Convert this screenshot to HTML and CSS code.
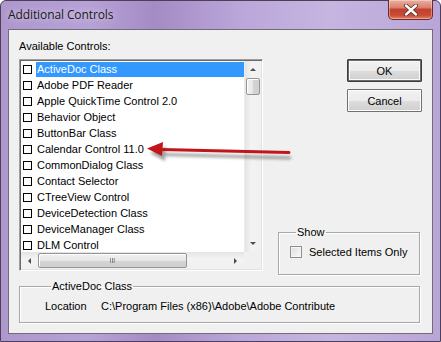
FILE: index.html
```html
<!DOCTYPE html>
<html>
<head>
<meta charset="utf-8">
<link rel="stylesheet" href="styles.css">
</head>
<body>
<div class="window">
  <div class="titlebar">
    <span class="title">Additional Controls</span>
    <div class="close">
      <svg width="18" height="12" viewBox="0 0 18 12">
        <path d="M4 1.5 L14 10.5 M14 1.5 L4 10.5" stroke="#5a2a22" stroke-width="4" stroke-linecap="round"/>
        <path d="M4 1.5 L14 10.5 M14 1.5 L4 10.5" stroke="#ffffff" stroke-width="2.4" stroke-linecap="round"/>
      </svg>
    </div>
  </div>
  <div class="client">
    <div class="lbl">Available Controls:</div>
    <div class="main">
      <div class="listbox">
        <div class="listarea">
          <div class="items">
            <div class="item"><span class="cb"></span><span class="txt sel">ActiveDoc Class</span></div>
            <div class="item"><span class="cb"></span><span class="txt">Adobe PDF Reader</span></div>
            <div class="item"><span class="cb"></span><span class="txt">Apple QuickTime Control 2.0</span></div>
            <div class="item"><span class="cb"></span><span class="txt">Behavior Object</span></div>
            <div class="item"><span class="cb"></span><span class="txt">ButtonBar Class</span></div>
            <div class="item"><span class="cb"></span><span class="txt">Calendar Control 11.0</span></div>
            <div class="item"><span class="cb"></span><span class="txt">CommonDialog Class</span></div>
            <div class="item"><span class="cb"></span><span class="txt">Contact Selector</span></div>
            <div class="item"><span class="cb"></span><span class="txt">CTreeView Control</span></div>
            <div class="item"><span class="cb"></span><span class="txt">DeviceDetection Class</span></div>
            <div class="item"><span class="cb"></span><span class="txt">DeviceManager Class</span></div>
            <div class="item"><span class="cb"></span><span class="txt">DLM Control</span></div>
          </div>
          <div class="vscroll">
            <div class="arrow"><span class="tri up"></span></div>
            <div class="vthumb"></div>
            <div class="vtrack"></div>
            <div class="arrow"><span class="tri down"></span></div>
          </div>
        </div>
        <div class="hrow">
          <div class="hscroll">
            <div class="arrow"><span class="tri left"></span></div>
            <div class="hthumb"><span class="grip">III</span></div>
            <div class="htrack"></div>
            <div class="arrow"><span class="tri right"></span></div>
          </div>
          <div class="corner"></div>
        </div>
      </div>
      <div class="side">
        <div class="btn default">OK</div>
        <div class="btn">Cancel</div>
        <div class="spacer"></div>
        <fieldset class="group show">
          <legend>Show</legend>
          <div class="chkrow"><span class="bigcb"></span><span>Selected Items Only</span></div>
        </fieldset>
      </div>
    </div>
    <fieldset class="group info">
      <legend>ActiveDoc Class</legend>
      <div class="locrow"><span class="loclbl">Location</span><span>C:\Program Files (x86)\Adobe\Adobe Contribute</span></div>
    </fieldset>
  </div>
  <svg class="redarrow" width="160" height="30" viewBox="0 0 160 30">
    <defs>
      <filter id="sh" x="-10%" y="-50%" width="120%" height="200%">
        <feGaussianBlur stdDeviation="1.6"/>
      </filter>
    </defs>
    <g filter="url(#sh)" opacity="0.55" transform="translate(2,4)">
      <path d="M17 9.5 L143 13" stroke="#555" stroke-width="3.2" fill="none"/>
      <path d="M2 8 L18 1.5 L17 16 Z" fill="#555"/>
    </g>
    <path d="M16 8.5 L143 11.5" stroke="#c4141b" stroke-width="3" fill="none" stroke-linecap="round"/>
    <path d="M1 7.5 L17 1 L16 15 Z" fill="#c4141b"/>
  </svg>
</div>
</body>
</html>
```

FILE: styles.css
```css
* { box-sizing: border-box; }
html, body { margin: 0; padding: 0; }
body { width: 441px; height: 342px; overflow: hidden; background: #fff; }

.window {
  position: relative;
  width: 441px;
  height: 342px;
  border: 1px solid #4a4058;
  border-radius: 6px 6px 0 0;
  background: linear-gradient(to right, #ad97cd 0%, #b7a2d7 20%, #a48bc4 35%, #bba7da 55%, #c5b5e0 75%, #b9a5d8 100%);
  display: flex;
  flex-direction: column;
  font-family: "Liberation Sans", Arial, sans-serif;
  font-size: 11px;
  color: #000;
}

.titlebar {
  height: 28px;
  display: flex;
  align-items: flex-start;
  padding-left: 7px;
  position: relative;
}
.title {
  font-family: "Open Sans", "Noto Sans", sans-serif;
  font-size: 12px;
  line-height: 16px;
  margin-top: 6px;
  color: #1a1a1a;
  text-shadow: 0 0 6px rgba(255,255,255,0.7);
  letter-spacing: -0.1px;
}
.close {
  position: absolute;
  right: 7px;
  top: -1px;
  width: 45px;
  height: 20px;
  border: 1px solid #6e2a22;
  border-top: none;
  border-radius: 0 0 5px 5px;
  background: linear-gradient(to bottom, #eab1a2 0%, #d9806c 40%, #c2402d 50%, #c94a34 80%, #e0836b 100%);
  box-shadow: inset 0 0 0 1px rgba(255,255,255,0.35);
  display: flex;
  align-items: center;
  justify-content: center;
}

.client {
  margin: 0 7px 0 7px;
  height: 305px;
  background: #f0f0f0;
  border: 1px solid #6f6f6f;
  padding: 10px 10px 0 10px;
  display: flex;
  flex-direction: column;
}

.lbl { line-height: 13px; height: 13px; margin-bottom: 6px; }

.main { display: flex; }

.listbox {
  width: 245px;
  height: 212px;
  border: 1px solid #a0a0a0;
  border-right-color: #fff;
  border-bottom-color: #fff;
  box-shadow: inset 1px 1px 0 #696969, inset -1px -1px 0 #e3e3e3;
  padding: 1px;
  background: #fff;
  display: flex;
  flex-direction: column;
}
.listarea { flex: 1; display: flex; overflow: hidden; }
.items { flex: 1; padding-top: 0; overflow: hidden; }
.item { height: 16px; display: flex; align-items: center; padding-left: 2px; white-space: nowrap; }
.cb {
  width: 9px; height: 9px;
  border: 1px solid #000;
  background: #fff;
  margin-right: 4px;
  flex: none;
}
.txt { line-height: 15px; padding: 0 1px; }
.txt.sel { background: #3399ff; color: #fff; flex: 1; }

.vscroll {
  width: 17px;
  display: flex;
  flex-direction: column;
  background: linear-gradient(to right, #e4e4e4, #f3f3f3 40%, #f0f0f0);
  border-left: 1px solid #ececec;
}
.arrow { height: 17px; flex: none; display: flex; align-items: center; justify-content: center; }
.vthumb {
  height: 17px; margin: 0 1px;
  border: 1px solid #959595;
  border-radius: 2px;
  background: linear-gradient(to right, #f2f2f2, #e6e6e6 50%, #d5d5d5 51%, #cfcfcf);
  box-shadow: inset 1px 1px 0 #fff;
}
.vtrack { flex: 1; }
.tri { width: 0; height: 0; display: block; }
.tri.up { border-left: 3px solid transparent; border-right: 3px solid transparent; border-bottom: 3px solid #4d4d4d; }
.tri.down { border-left: 3px solid transparent; border-right: 3px solid transparent; border-top: 3px solid #4d4d4d; }
.tri.left { border-top: 3px solid transparent; border-bottom: 3px solid transparent; border-right: 3px solid #4d4d4d; }
.tri.right { border-top: 3px solid transparent; border-bottom: 3px solid transparent; border-left: 3px solid #4d4d4d; }

.hrow { height: 17px; display: flex; flex: none; }
.hscroll {
  flex: 1;
  display: flex;
  background: linear-gradient(to bottom, #e4e4e4, #f3f3f3 40%, #f0f0f0);
}
.hscroll .arrow { width: 17px; height: 17px; }
.hthumb {
  width: 149px; margin: 1px 0;
  border: 1px solid #959595;
  border-radius: 2px;
  background: linear-gradient(to bottom, #f2f2f2, #e6e6e6 50%, #d5d5d5 51%, #cfcfcf);
  box-shadow: inset 1px 1px 0 #fff;
  display: flex; align-items: center; justify-content: center;
}
.grip { font-size: 8px; letter-spacing: 0; color: #555; transform: scaleX(0.8); line-height: 8px; font-family: "Liberation Sans", sans-serif; }
.htrack { flex: 1; }
.corner { width: 17px; background: #f0f0f0; }

.side {
  flex: 1;
  display: flex;
  flex-direction: column;
  align-items: flex-end;
  padding-left: 15px;
}
.btn {
  width: 75px; height: 23px;
  border: 1px solid #707070;
  border-radius: 1px;
  background: linear-gradient(to bottom, #f2f2f2 0%, #ebebeb 50%, #dddddd 51%, #cfcfcf 100%);
  display: flex; align-items: center; justify-content: center;
  box-shadow: inset 0 0 0 1px #fcfcfc;
  flex: none;
}
.btn.default { border: 1px solid #3c3c3c; box-shadow: inset 0 0 0 1px #6a6a6a, inset 0 0 0 2px #fafafa; }
.btn + .btn { margin-top: 7px; }
.spacer { flex: 1; }

.group {
  margin: 0;
  border: 1px solid #a8a8a8;
  box-shadow: 1px 1px 0 #fff, inset 1px 1px 0 #fff;
  padding: 0;
}
.group legend { padding: 0 1px; margin-left: 6px; line-height: 13px; }
.show {
  width: 142px;
  height: 49px;
  margin-right: 2px;
  margin-bottom: -4px;
  padding: 7px 0 0 11px;
}
.chkrow { display: flex; align-items: center; }
.bigcb {
  width: 12px; height: 12px;
  border: 1px solid #8e8f8f;
  background: linear-gradient(135deg, #dcdcdc, #fbfbfb);
  box-shadow: inset 0 0 0 1px #f4f4f4;
  margin-right: 7px;
}
.info {
  margin-top: 9px;
  margin-right: 2px;
  height: 43px;
  padding: 7px 0 0 25px;
}
.locrow { display: flex; line-height: 13px; }
.loclbl { width: 56px; }

.redarrow { position: absolute; left: 145px; top: 140px; }
```
